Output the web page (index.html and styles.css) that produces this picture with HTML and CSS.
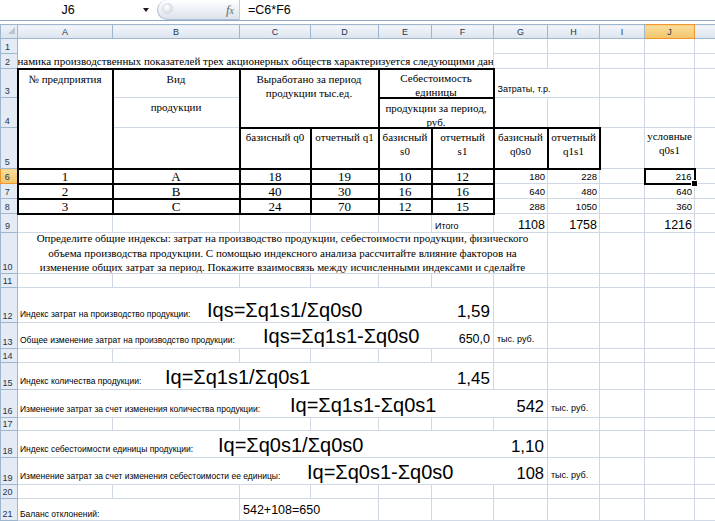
FILE: index.html
```html
<!DOCTYPE html>
<html lang="ru">
<head>
<meta charset="utf-8">
<title>Excel</title>
<link rel="stylesheet" href="styles.css">
</head>
<body>
<div class="app">
  <div class="fbar">
    <div class="namebox"><span class="nb-text">J6</span><span class="nb-arrow"></span></div>
    <div class="fxpill"><span class="knob"></span><span class="fx">f<span class="fx-x">x</span></span></div>
    <div class="formula">=C6*F6</div>
  </div>
  <table class="sheet">
    <colgroup>
      <col class="c-rh"><col class="c-a"><col class="c-b"><col class="c-c"><col class="c-d"><col class="c-e"><col class="c-f"><col class="c-g"><col class="c-h"><col class="c-i"><col class="c-j"><col class="c-k">
    </colgroup>
    <tr class="r14">
      <th class="corner"><span class="tri"></span></th>
      <th class="ch">A</th><th class="ch">B</th><th class="ch">C</th><th class="ch">D</th><th class="ch">E</th><th class="ch">F</th><th class="ch">G</th><th class="ch">H</th><th class="ch">I</th><th class="ch ch-sel">J</th><th class="ch"></th>
    </tr>
    <tr class="r15">
      <th class="rh">1</th>
      <td colspan="6" class="nb"></td><td></td><td></td><td></td><td></td><td></td>
    </tr>
    <tr class="r15">
      <th class="rh">2</th>
      <td colspan="6" class="nb ser title">Динамика производственных показателей трех акционерных обществ характеризуется следующими данными:</td><td></td><td></td><td></td><td></td><td></td>
    </tr>
    <tr class="r29">
      <th class="rh">3</th>
      <td rowspan="3" class="ser thk hd">№ предприятия</td>
      <td class="ser bt bl br hd">Вид</td>
      <td colspan="2" rowspan="2" class="ser thk hd lh14">Выработано за период<br>продукции тыс.ед.</td>
      <td colspan="2" class="ser bt bl br hd p1 vis"><div class="cl26">Себестоимость<br>единицы</div></td>
      <td colspan="2" class="cost">Затраты, т.р.</td>
      <td></td><td></td><td></td>
    </tr>
    <tr class="r30">
      <th class="rh">4</th>
      <td class="ser bl br hd">продукции</td>
      <td colspan="2" class="ser thk hd lh14"><div class="clip27">продукции за период,<br>руб.</div></td>
      <td></td><td></td><td></td><td></td><td></td>
    </tr>
    <tr class="r41">
      <th class="rh">5</th>
      <td class="bl br bb"></td>
      <td class="ser thk hd lh14 p1">базисный q0</td>
      <td class="ser thk hd lh14 p1">отчетный q1</td>
      <td class="ser thk hd lh14 p1">базисный<br>s0</td>
      <td class="ser thk hd lh14 p1">отчетный<br>s1</td>
      <td class="ser thk hd lh14 p1">базисный<br>q0s0</td>
      <td class="ser thk hd lh14 p1">отчетный<br>q1s1</td>
      <td></td>
      <td class="ser hd lh14 p1">условные<br>q0s1</td>
      <td></td>
    </tr>
    <tr class="r15">
      <th class="rh rh-sel">6</th>
      <td class="ser dat thk">1</td><td class="ser dat thk">A</td><td class="ser dat thk">18</td><td class="ser dat thk">19</td><td class="ser dat thk">10</td><td class="ser dat thk">12</td>
      <td class="num">180</td><td class="num">228</td><td></td><td class="num selcell">216<span class="handle"></span></td><td></td>
    </tr>
    <tr class="r15">
      <th class="rh">7</th>
      <td class="ser dat thk">2</td><td class="ser dat thk">B</td><td class="ser dat thk">40</td><td class="ser dat thk">30</td><td class="ser dat thk">16</td><td class="ser dat thk">16</td>
      <td class="num">640</td><td class="num">480</td><td></td><td class="num">640</td><td></td>
    </tr>
    <tr class="r15">
      <th class="rh">8</th>
      <td class="ser dat thk">3</td><td class="ser dat thk">C</td><td class="ser dat thk">24</td><td class="ser dat thk">70</td><td class="ser dat thk">12</td><td class="ser dat thk">15</td>
      <td class="num">288</td><td class="num">1050</td><td></td><td class="num">360</td><td></td>
    </tr>
    <tr class="r19">
      <th class="rh">9</th>
      <td></td><td></td><td></td><td></td><td></td>
      <td class="itogo">Итого</td>
      <td class="num big">1108</td><td class="num big">1758</td><td></td><td class="num big">1216</td><td></td>
    </tr>
    <tr class="r41">
      <th class="rh">10</th>
      <td colspan="7" class="ser task"><div class="task-clip"><div class="task-in">Определите общие индексы: затрат на производство продукции, себестоимости продукции, физического<br>объема производства продукции. С помощью индексного анализа рассчитайте влияние факторов на<br>изменение общих затрат за период. Покажите взаимосвязь между исчисленными индексами и сделайте</div></div></td>
      <td></td><td></td><td></td><td></td>
    </tr>
    <tr class="r14">
      <th class="rh">11</th>
      <td></td><td></td><td></td><td></td><td></td><td></td><td></td><td></td><td></td><td></td><td></td>
    </tr>
    <tr class="r35">
      <th class="rh">12</th>
      <td colspan="6" class="calc"><div class="calc-row"><span class="lbl w187">Индекс затрат на производство продукции:</span><span class="fml">Iqs=Σq1s1/Σq0s0</span><span class="val">1,59</span></div></td>
      <td></td><td></td><td></td><td></td><td></td>
    </tr>
    <tr class="r26">
      <th class="rh">13</th>
      <td colspan="6" class="calc"><div class="calc-row"><span class="lbl w243">Общее изменение затрат на производство продукции:</span><span class="fml">Iqs=Σq1s1-Σq0s0</span><span class="val small">650,0</span></div></td>
      <td class="unit">тыс. руб.</td><td></td><td></td><td></td><td></td>
    </tr>
    <tr class="r14">
      <th class="rh">14</th>
      <td></td><td></td><td></td><td></td><td></td><td></td><td></td><td></td><td></td><td></td><td></td>
    </tr>
    <tr class="r27">
      <th class="rh">15</th>
      <td colspan="6" class="calc"><div class="calc-row"><span class="lbl w145">Индекс количества продукции:</span><span class="fml">Iq=Σq1s1/Σq0s1</span><span class="val">1,45</span></div></td>
      <td></td><td></td><td></td><td></td><td></td>
    </tr>
    <tr class="r28">
      <th class="rh">16</th>
      <td colspan="7" class="calc"><div class="calc-row"><span class="lbl w270">Изменение затрат за счет изменения количества продукции:</span><span class="fml">Iq=Σq1s1-Σq0s1</span><span class="val mid">542</span></div></td>
      <td class="unit">тыс. руб.</td><td></td><td></td><td></td>
    </tr>
    <tr class="r13">
      <th class="rh">17</th>
      <td></td><td></td><td></td><td></td><td></td><td></td><td></td><td></td><td></td><td></td><td></td>
    </tr>
    <tr class="r27">
      <th class="rh">18</th>
      <td colspan="7" class="calc"><div class="calc-row"><span class="lbl w198">Индекс себестоимости единицы продукции:</span><span class="fml">Iq=Σq0s1/Σq0s0</span><span class="val">1,10</span></div></td>
      <td></td><td></td><td></td><td></td>
    </tr>
    <tr class="r27">
      <th class="rh">19</th>
      <td colspan="7" class="calc"><div class="calc-row"><span class="lbl w287">Изменение затрат за счет изменения себестоимости ее единицы:</span><span class="fml">Iq=Σq0s1-Σq0s0</span><span class="val mid">108</span></div></td>
      <td class="unit">тыс. руб.</td><td></td><td></td><td></td>
    </tr>
    <tr class="r14">
      <th class="rh">20</th>
      <td></td><td></td><td></td><td></td><td></td><td></td><td></td><td></td><td></td><td></td><td></td>
    </tr>
    <tr class="r22">
      <th class="rh">21</th>
      <td colspan="2" class="calc"><span class="lbl">Баланс отклонений:</span></td>
      <td colspan="2" class="balance">542+108=650</td>
      <td></td><td></td><td></td><td></td><td></td><td></td><td></td>
    </tr>
    <tr class="r14">
      <th class="rh">22</th>
      <td></td><td></td><td></td><td></td><td></td><td></td><td></td><td></td><td></td><td></td><td></td>
    </tr>
  </table>
</div>
</body>
</html>
```

FILE: styles.css
```css
html, body {
  margin: 0;
  padding: 0;
  background: #fff;
}

.app {
  width: 715px;
  height: 521px;
  overflow: hidden;
  background: #fff;
  font-family: "Liberation Sans", Arial, sans-serif;
}

/* ---------- formula bar ---------- */
.fbar {
  display: flex;
  height: 20px;
  border-bottom: 1px solid #8ea8c9;
  margin-bottom: 3px;
}

.namebox {
  width: 157px;
  display: flex;
  align-items: center;
}

.nb-text {
  width: 136px;
  text-align: center;
  font-size: 12.5px;
  color: #000;
}

.nb-arrow {
  width: 0;
  height: 0;
  margin-left: 7px;
  border-left: 3.5px solid transparent;
  border-right: 3.5px solid transparent;
  border-top: 4px solid #1a1a1a;
}

.fxpill {
  width: 83px;
  box-sizing: border-box;
  border: 1px solid #b3c0d2;
  border-top: none;
  border-right: 1px solid #c3ccd8;
  border-radius: 0 0 0 11px;
  border-top-left-radius: 11px;
  background: linear-gradient(#ffffff, #eef2f7 45%, #dce3ec);
  display: flex;
  align-items: center;
  justify-content: space-between;
  padding: 0 5px 0 4px;
}

.knob {
  width: 9px;
  height: 9px;
  border-radius: 50%;
  background: radial-gradient(circle at 40% 35%, #ffffff, #cdd4dd);
  border: 1px solid #d6dce4;
  margin-top: -3px;
}

.fx {
  font-family: "Liberation Serif", serif;
  font-style: italic;
  font-size: 13px;
  color: #6a6a6a;
}

.fx-x {
  font-size: 10px;
}

.formula {
  display: flex;
  align-items: center;
  padding-left: 8px;
  font-size: 12.5px;
  color: #000;
}

/* ---------- sheet ---------- */
.sheet {
  border-collapse: collapse;
  table-layout: fixed;
  width: 724px;
}

.c-rh { width: 17px; }
.c-a { width: 95px; }
.c-b { width: 127px; }
.c-c { width: 71px; }
.c-d { width: 68px; }
.c-e { width: 53px; }
.c-f { width: 62px; }
.c-g { width: 54px; }
.c-h { width: 52px; }
.c-i { width: 45px; }
.c-j { width: 50px; }
.c-k { width: 30px; }

.r13 { height: 13px; }
.r14 { height: 14px; }
.r15 { height: 15px; }
.r19 { height: 19px; }
.r22 { height: 22px; }
.r26 { height: 26px; }
.r27 { height: 27px; }
.r28 { height: 28px; }
.r29 { height: 29px; }
.r30 { height: 30px; }
.r35 { height: 35px; }
.r41 { height: 41px; }

th {
  font-weight: normal;
  font-size: 9px;
  color: #22364f;
  padding: 0;
  border: 1px solid #9eb6ce;
}

td {
  border: 1px solid #d0d7e5;
  padding: 0 2px;
  overflow: hidden;
  white-space: nowrap;
  vertical-align: bottom;
  font-size: 9.5px;
  line-height: 1.15;
  color: #000;
}

.corner {
  background: linear-gradient(#eef2f8, #dbe3ee);
  text-align: right;
  vertical-align: bottom;
}

.tri {
  display: inline-block;
  width: 0;
  height: 0;
  margin: 0 2px 2px 0;
  border-left: 7px solid transparent;
  border-bottom: 7px solid #b6c4d6;
}

.ch {
  background: linear-gradient(#f3f6fa, #dce4ef);
  text-align: center;
  vertical-align: middle;
}

.ch-sel {
  background: linear-gradient(#f9dd9a, #f2c46a);
  border: 1px solid #f0962e !important;
}

.rh {
  background: #e4ebf5;
  text-align: center;
  vertical-align: bottom;
  padding: 0 3px 1px 0;
}

.rh-sel {
  background: linear-gradient(#f9dd9a, #f2c46a);
  border: 1px solid #f0962e !important;
}

/* borders */
.nb { border: none !important; }
.thk { border: 2px solid #000 !important; }
.bt { border-top: 2px solid #000 !important; }
.bb { border-bottom: 2px solid #000 !important; }
.bl { border-left: 2px solid #000 !important; }
.br { border-right: 2px solid #000 !important; }

/* text styles */
.ser {
  font-family: "Liberation Serif", "Times New Roman", serif;
  font-size: 11px;
}

.title {
  text-indent: -14px;
  padding-left: 0;
  vertical-align: bottom;
}

.hd {
  vertical-align: top;
  text-align: center;
  line-height: 15px;
  padding-top: 2px;
}

.lh14 { line-height: 14px; }
.p1 { padding-top: 1px; }
.vis { overflow: visible; }

.cl26 {
  height: 26px;
  line-height: 14px;
}

.clip27 {
  height: 26px;
  overflow: hidden;
}

.cost {
  font-size: 9px;
  padding-left: 3px;
  padding-bottom: 3px;
}

.dat {
  font-size: 13px;
  text-align: center;
  line-height: 13px;
}

.num {
  text-align: right;
  font-size: 9.5px;
  padding-right: 2px;
}

.num.big {
  font-size: 12.5px;
}

.selcell {
  position: relative;
  border: 2px solid #000 !important;
  overflow: visible;
}

.handle {
  position: absolute;
  right: -4px;
  bottom: -4px;
  width: 5px;
  height: 5px;
  background: #000;
  border: 1px solid #fff;
}

.itogo {
  font-size: 9px;
  padding-left: 3px;
  padding-bottom: 1px;
}

.task {
  padding: 0;
  vertical-align: top;
}

.task-clip {
  height: 40px;
  overflow: hidden;
}

.task-in {
  margin-top: -2px;
  line-height: 14.5px;
  text-align: center;
  white-space: nowrap;
}

.calc {
  padding: 0 3px 0 2px;
  vertical-align: bottom;
}

.calc-row {
  display: flex;
  align-items: baseline;
}

.lbl {
  flex: none;
  font-size: 8.5px;
  line-height: 1.15;
}

.w145 { width: 145px; }
.w187 { width: 187px; }
.w198 { width: 198px; }
.w243 { width: 243px; }
.w270 { width: 270px; }
.w287 { width: 287px; }

.fml {
  flex: none;
  font-size: 20px;
  line-height: 1.15;
}

.val {
  margin-left: auto;
  font-size: 17px;
  line-height: 1.15;
}

.val.small {
  font-size: 12.5px;
}

.val.mid {
  font-size: 16.5px;
}

.unit {
  font-size: 9px;
  padding-left: 3px;
  padding-bottom: 4px;
}

.balance {
  font-size: 12.5px;
  padding-left: 3px;
  padding-bottom: 3px;
}
```
